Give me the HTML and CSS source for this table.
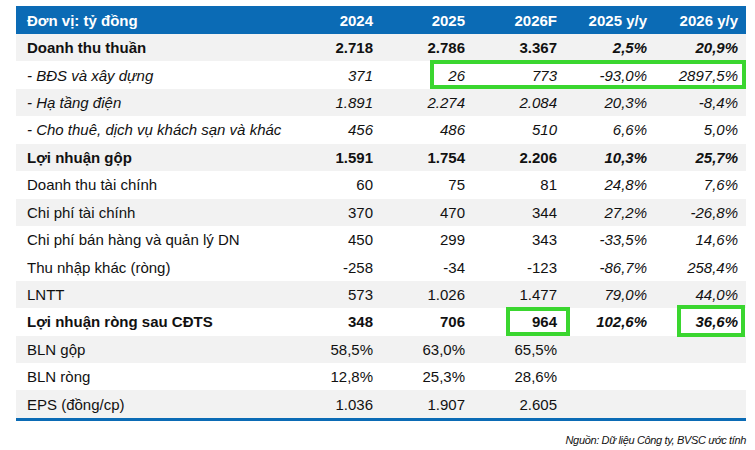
FILE: index.html
```html
<!DOCTYPE html>
<html lang="vi">
<head>
<meta charset="utf-8">
<link rel="stylesheet" href="styles.css">
</head>
<body>
<div class="page">
  <div class="table">
    <div class="row head">
      <div class="c lbl">Đơn vị: tỷ đồng</div>
      <div class="c">2024</div><div class="c">2025</div><div class="c">2026F</div><div class="c">2025 y/y</div><div class="c">2026 y/y</div>
    </div>
    <div class="row gray bold">
      <div class="c lbl">Doanh thu thuần</div>
      <div class="c">2.718</div><div class="c">2.786</div><div class="c">3.367</div><div class="c it">2,5%</div><div class="c it">20,9%</div>
    </div>
    <div class="row it">
      <div class="c lbl">- BĐS và xây dựng</div>
      <div class="c">371</div><div class="c">26</div><div class="c">773</div><div class="c">-93,0%</div><div class="c">2897,5%</div>
    </div>
    <div class="row gray it">
      <div class="c lbl">- Hạ tầng điện</div>
      <div class="c">1.891</div><div class="c">2.274</div><div class="c">2.084</div><div class="c">20,3%</div><div class="c">-8,4%</div>
    </div>
    <div class="row it">
      <div class="c lbl">- Cho thuê, dịch vụ khách sạn và khác</div>
      <div class="c">456</div><div class="c">486</div><div class="c">510</div><div class="c">6,6%</div><div class="c">5,0%</div>
    </div>
    <div class="row gray bold">
      <div class="c lbl">Lợi nhuận gộp</div>
      <div class="c">1.591</div><div class="c">1.754</div><div class="c">2.206</div><div class="c it">10,3%</div><div class="c it">25,7%</div>
    </div>
    <div class="row">
      <div class="c lbl">Doanh thu tài chính</div>
      <div class="c">60</div><div class="c">75</div><div class="c">81</div><div class="c it">24,8%</div><div class="c it">7,6%</div>
    </div>
    <div class="row gray">
      <div class="c lbl">Chi phí tài chính</div>
      <div class="c">370</div><div class="c">470</div><div class="c">344</div><div class="c it">27,2%</div><div class="c it">-26,8%</div>
    </div>
    <div class="row">
      <div class="c lbl">Chi phí bán hàng và quản lý DN</div>
      <div class="c">450</div><div class="c">299</div><div class="c">343</div><div class="c it">-33,5%</div><div class="c it">14,6%</div>
    </div>
    <div class="row">
      <div class="c lbl">Thu nhập khác (ròng)</div>
      <div class="c">-258</div><div class="c">-34</div><div class="c">-123</div><div class="c it">-86,7%</div><div class="c it">258,4%</div>
    </div>
    <div class="row gray">
      <div class="c lbl">LNTT</div>
      <div class="c">573</div><div class="c">1.026</div><div class="c">1.477</div><div class="c it">79,0%</div><div class="c it">44,0%</div>
    </div>
    <div class="row bold">
      <div class="c lbl">Lợi nhuận ròng sau CĐTS</div>
      <div class="c">348</div><div class="c">706</div><div class="c">964</div><div class="c it">102,6%</div><div class="c it">36,6%</div>
    </div>
    <div class="row gray">
      <div class="c lbl">BLN gộp</div>
      <div class="c">58,5%</div><div class="c">63,0%</div><div class="c">65,5%</div><div class="c"></div><div class="c"></div>
    </div>
    <div class="row">
      <div class="c lbl">BLN ròng</div>
      <div class="c">12,8%</div><div class="c">25,3%</div><div class="c">28,6%</div><div class="c"></div><div class="c"></div>
    </div>
    <div class="row gray">
      <div class="c lbl">EPS (đồng/cp)</div>
      <div class="c">1.036</div><div class="c">1.907</div><div class="c">2.605</div><div class="c"></div><div class="c"></div>
    </div>
    <div class="mark mark-bds"></div>
    <div class="mark mark-964"></div>
    <div class="mark mark-366"></div>
  </div>
  <div class="source">Nguồn: Dữ liệu Công ty, BVSC ước tính</div>
</div>
</body>
</html>
```

FILE: styles.css
```css
html, body {
  margin: 0;
  padding: 0;
  background: #ffffff;
}
body {
  font-family: "Liberation Sans", Arial, sans-serif;
  color: #111111;
}
.page {
  padding: 6px 9px 0 16px;
}
.table {
  position: relative;
  width: 730px;
  border-bottom: 3px solid #0b6bb5;
}
.row {
  display: grid;
  grid-template-columns: 273px 92px 92px 92px 90px 91px;
  height: 27.43px;
  align-items: center;
  font-size: 15px;
}
.row.head {
  height: 28px;
  background: #0b6bb5;
  color: #ffffff;
  font-weight: bold;
}
.row.gray {
  background: #f2f2f2;
}
.bold {
  font-weight: bold;
}
.it {
  font-style: italic;
}
.c {
  text-align: right;
  padding-right: 8px;
  white-space: nowrap;
}
.c.lbl {
  text-align: left;
  padding-left: 11px;
  padding-right: 0;
}
.mark {
  position: absolute;
  border: 4px solid #3ad62f;
  box-sizing: border-box;
}
.mark-bds {
  left: 414px;
  top: 54px;
  width: 316px;
  height: 29px;
}
.mark-964 {
  left: 490px;
  top: 301px;
  width: 64px;
  height: 29px;
}
.mark-366 {
  left: 661px;
  top: 299px;
  width: 68px;
  height: 32px;
}
.source {
  width: 730px;
  text-align: right;
  font-style: italic;
  font-size: 11px;
  letter-spacing: -0.35px;
  margin-top: 13px;
  color: #111111;
}
```
